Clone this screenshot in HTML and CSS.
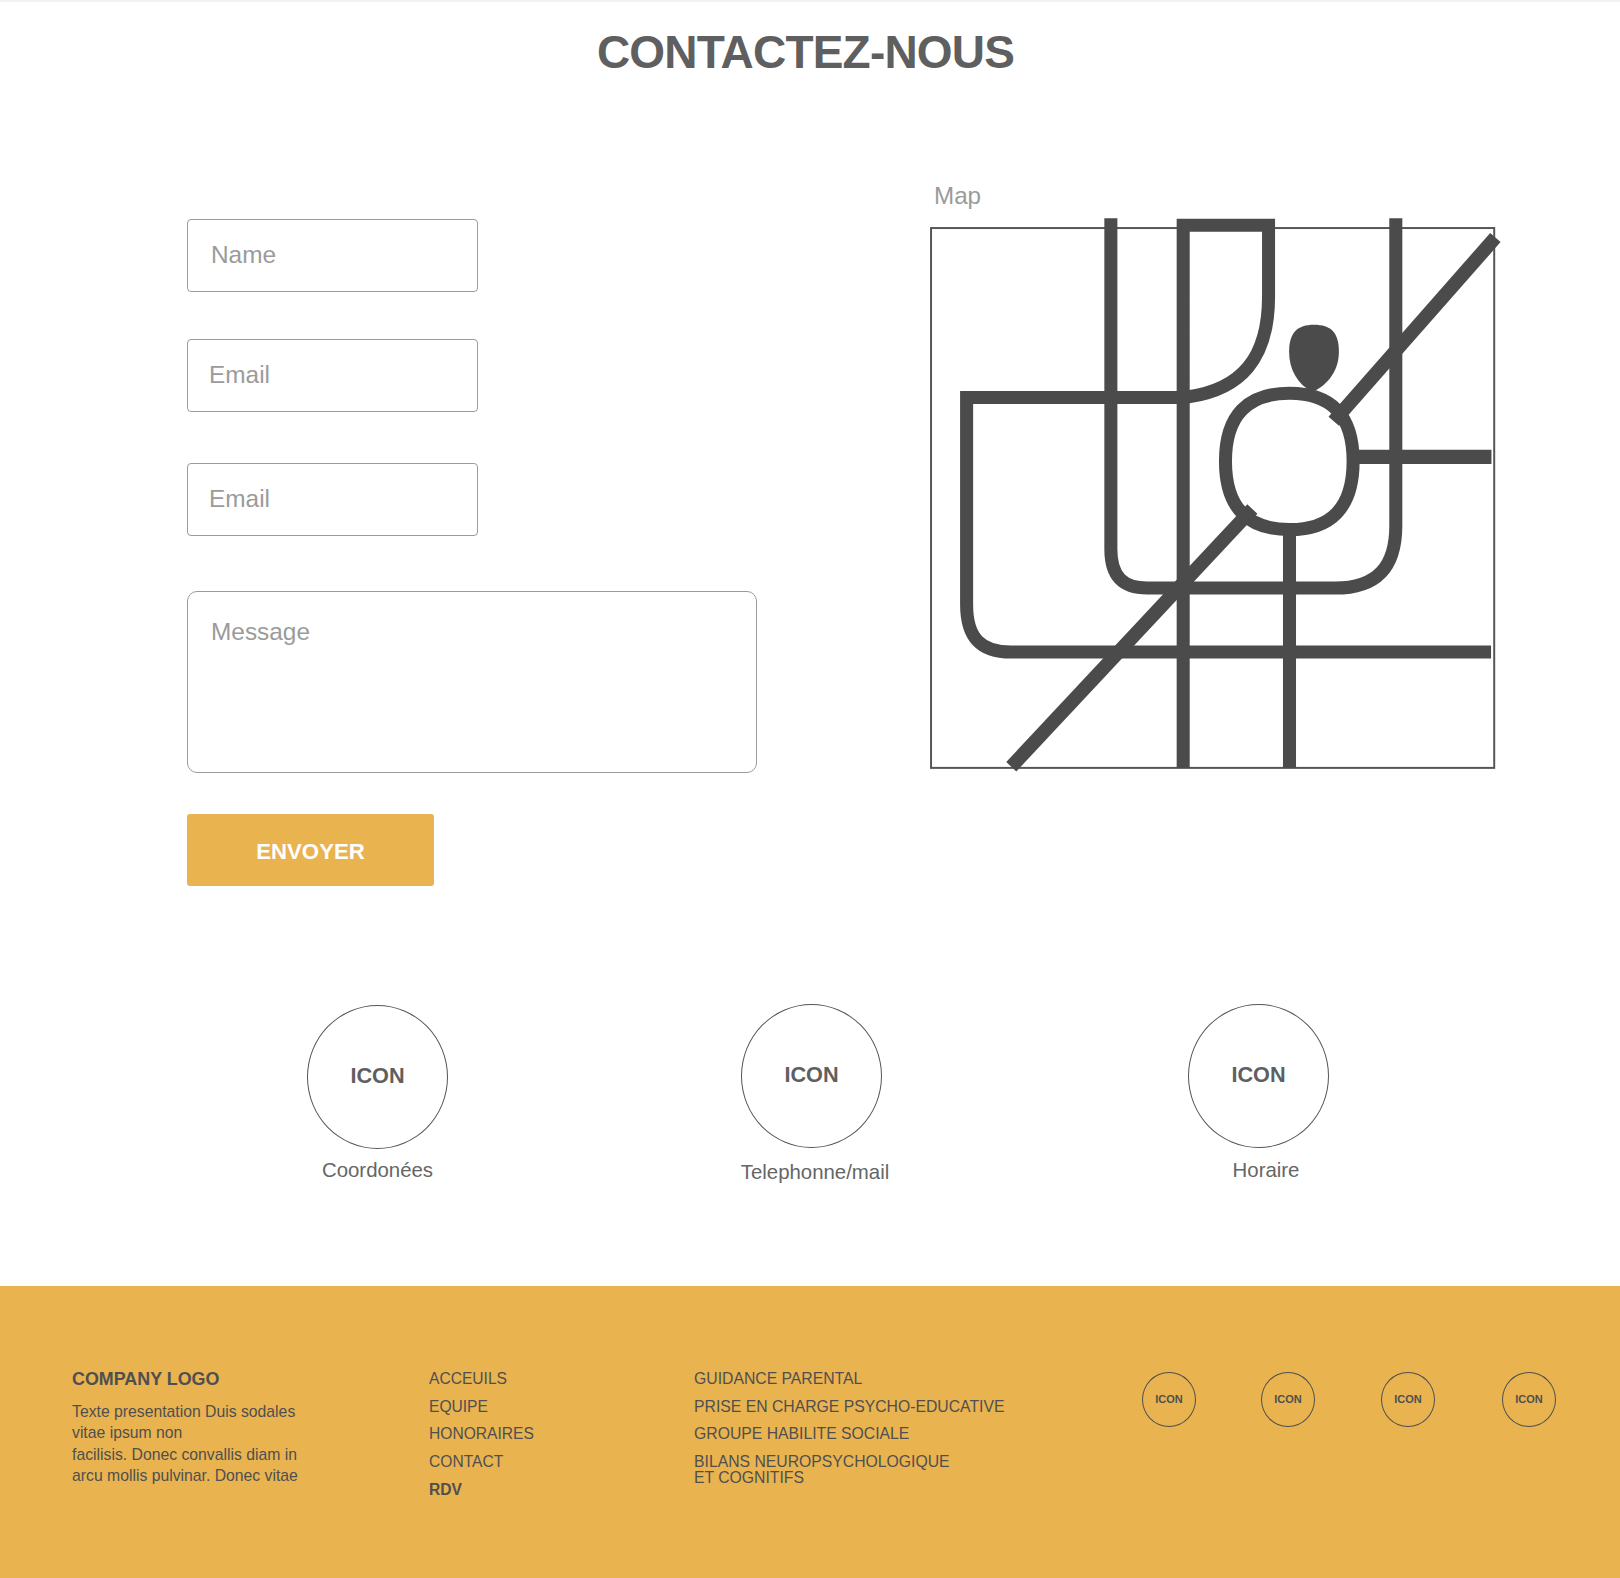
FILE: index.html

```html
<!DOCTYPE html>
<html lang="en">
<head>
  <meta charset="UTF-8">
  <title>Contactez-nous</title>
  <link rel="stylesheet" href="styles.css">
</head>
<body>

<header class="page-head">
  <h1>CONTACTEZ-NOUS</h1>
</header>

<section class="contact">
  <form class="contact-form">
    <input class="field field-name" type="text" placeholder="Name">
    <input class="field field-mail" type="text" placeholder="Email">
    <input class="field field-mail field-last" type="text" placeholder="Email">
    <textarea class="message" placeholder="Message"></textarea>
    <button class="send-btn" type="button">ENVOYER</button>
  </form>

  <div class="map">
    <div class="map-label">Map</div>
    <svg class="map-drawing" viewBox="63 114 1467 1417" width="580" height="560">
      <rect class="frame" x="78" y="147" width="1425" height="1366"/>
      <!-- roads -->
      <path class="road" d="M533 122 V960 C533 1030 565 1058 625 1058 H1100 C1210 1058 1254 1000 1254 900 V122"/>
      <path class="road" d="M716 1513 V140 H932 V320 C932 480 860 555 730 574 L716 576 H168 V1100 C168 1185 205 1220 280 1220 H1495"/>
      <path class="road" d="M985 565 C1090 565 1146 620 1146 737 C1146 855 1090 910 985 910 C880 910 823 855 823 737 C823 620 880 565 985 565 Z"/>
      <path class="road" d="M985 920 V1513"/>
      <path class="road road-wide" d="M1155 726 H1496"/>
      <path class="road road-diagonal" d="M1097 636 L1506 171"/>
      <path class="road road-diagonal" d="M281 1510 L891 858"/>
      <!-- pin -->
      <path class="pin" d="M1047 392 C1090 392 1110 412 1110 460 C1110 505 1085 542 1043 562 C1005 542 984 505 984 460 C984 412 1005 392 1047 392 Z"/>
    </svg>
  </div>
</section>

<section class="infos">
  <div class="info info-one">
    <div class="info-icon">ICON</div>
    <div class="info-label">Coordonées</div>
  </div>
  <div class="info info-two">
    <div class="info-icon">ICON</div>
    <div class="info-label">Telephonne/mail</div>
  </div>
  <div class="info info-three">
    <div class="info-icon">ICON</div>
    <div class="info-label">Horaire</div>
  </div>
</section>

<footer class="site-footer">
  <div class="about">
    <div class="logo">COMPANY LOGO</div>
    <p>Texte presentation Duis sodales<br>vitae ipsum non<br>facilisis. Donec convallis diam in<br>arcu mollis pulvinar. Donec vitae</p>
  </div>

  <ul class="links links-main">
    <li>ACCEUILS</li>
    <li>EQUIPE</li>
    <li>HONORAIRES</li>
    <li>CONTACT</li>
    <li class="strong">RDV</li>
  </ul>

  <ul class="links links-services">
    <li>GUIDANCE PARENTAL</li>
    <li>PRISE EN CHARGE PSYCHO-EDUCATIVE</li>
    <li>GROUPE HABILITE SOCIALE</li>
    <li class="two-lines">BILANS NEUROPSYCHOLOGIQUE<br>ET COGNITIFS</li>
  </ul>

  <div class="socials">
    <div class="social">ICON</div>
    <div class="social">ICON</div>
    <div class="social">ICON</div>
    <div class="social">ICON</div>
  </div>
</footer>

</body>
</html>
```

FILE: styles.css

```css
html, body {
  margin: 0;
  padding: 0;
  background: #fff;
  font-family: 'Liberation Sans', Arial, sans-serif;
}

.page-head {
  height: 180px;
  border-top: 2px solid #f2f2f2;
  box-sizing: border-box;
  text-align: center;
  padding-right: 9px;
}

.page-head h1 {
  margin: 0;
  padding-top: 24px;
  font-size: 46px;
  line-height: 52px;
  letter-spacing: -0.8px;
  font-weight: bold;
  color: #5f5f5f;
}

/* form + map */
.contact {
  display: flex;
  padding-left: 187px;
  height: 707px;
}

.contact-form {
  width: 569px;
  padding-top: 39px;
  display: flex;
  flex-direction: column;
  align-items: flex-start;
}

.field {
  width: 291px;
  height: 73px;
  box-sizing: border-box;
  border: 1px solid #9b9b9b;
  border-radius: 4px;
  margin: 0 0 47px;
  padding: 0 0 1px 21px;
  font-family: inherit;
  font-size: 24.4px;
  outline: none;
}

.field-name {
  padding-left: 23px;
}

.field-mail {
  margin-bottom: 51px;
}

.field-last {
  margin-bottom: 55px;
}

.field::placeholder,
.message::placeholder {
  color: #9b9b9b;
  opacity: 1;
}

.message {
  display: block;
  width: 570px;
  height: 182px;
  box-sizing: border-box;
  border: 1px solid #9b9b9b;
  border-radius: 10px;
  margin: 0 0 41px;
  padding: 26px 23px;
  font-family: inherit;
  font-size: 24.4px;
  line-height: 28px;
  resize: none;
  outline: none;
}

.send-btn {
  width: 247px;
  height: 72px;
  padding: 3px 0 0;
  border: none;
  border-radius: 3px;
  background: #e9b350;
  color: #fff;
  font-family: inherit;
  font-size: 22.2px;
  font-weight: bold;
  cursor: pointer;
}

.map {
  margin-left: 169px;
}

.map-label {
  padding-left: 9px;
  height: 35px;
  line-height: 32px;
  font-size: 24.2px;
  color: #9b9b9b;
}

.map-drawing {
  display: block;
}

.frame {
  fill: none;
  stroke: #555;
  stroke-width: 5;
}

.road {
  fill: none;
  stroke: #4b4b4b;
  stroke-width: 33;
}

.road-wide {
  stroke-width: 36;
}

.road-diagonal {
  stroke-width: 35;
}

.pin {
  fill: #4b4b4b;
}

/* three round icons */
.infos {
  display: flex;
  align-items: flex-start;
  height: 399px;
  box-sizing: border-box;
  padding-top: 117px;
}

.info {
  width: 141px;
  display: flex;
  flex-direction: column;
  align-items: center;
}

.info-one {
  margin-left: 307px;
  margin-top: 1px;
}

.info-two {
  margin-left: 293px;
}

.info-three {
  margin-left: 306px;
}

.info-icon {
  width: 141px;
  height: 144px;
  box-sizing: border-box;
  border: 1px solid #555;
  border-radius: 50%;
  padding-bottom: 2px;
  display: flex;
  justify-content: center;
  align-items: center;
  font-size: 21.7px;
  font-weight: bold;
  color: #5f5f5f;
}

.info-label {
  margin-top: 9px;
  font-size: 20.4px;
  line-height: 24px;
  white-space: nowrap;
  color: #666;
}

.info-two .info-label {
  margin-top: 12px;
  margin-left: 7px;
}

.info-three .info-label {
  margin-top: 10px;
  margin-left: 15px;
}

/* footer */
.site-footer {
  display: flex;
  align-items: flex-start;
  height: 292px;
  box-sizing: border-box;
  padding: 83px 0 0 72px;
  background: #e9b350;
  color: #4f4f4f;
}

.about {
  width: 357px;
}

.logo {
  font-size: 17.9px;
  line-height: 20px;
  font-weight: bold;
}

.about p {
  margin: 12px 0 0;
  font-size: 15.75px;
  line-height: 21.3px;
}

.links {
  list-style: none;
  margin: 0;
  padding: 0;
  font-size: 15.6px;
}

.links li {
  height: 27.6px;
  line-height: 20px;
}

.links .strong {
  font-weight: bold;
  padding-top: 1px;
}

.links .two-lines {
  line-height: 16px;
  padding-top: 2px;
}

.links-main {
  width: 265px;
}

.links-services {
  width: 448px;
  font-size: 15.75px;
}

.socials {
  display: flex;
  gap: 66px;
  margin-top: 3px;
}

.social {
  width: 54px;
  height: 55px;
  box-sizing: border-box;
  border: 1px solid #4f4f4f;
  border-radius: 50%;
  padding-bottom: 1px;
  display: flex;
  justify-content: center;
  align-items: center;
  font-size: 11px;
  font-weight: bold;
}

.social:nth-child(2) {
  margin-left: -1px;
}

.social:nth-child(4) {
  margin-left: 1px;
}
```
